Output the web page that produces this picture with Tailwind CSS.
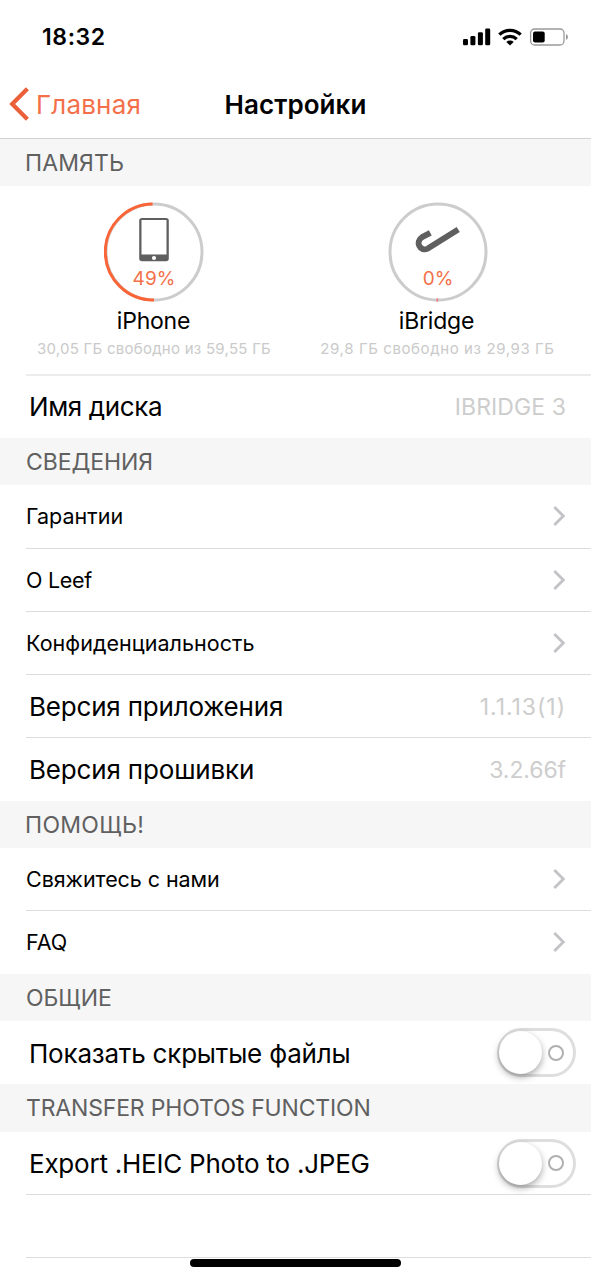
<!DOCTYPE html>
<html lang="ru">
<head>
<meta charset="utf-8">
<title>Настройки</title>
<script src="https://cdn.jsdelivr.net/npm/@tailwindcss/browser@4"></script>
</head>
<body class="w-[591px] h-[1280px] overflow-hidden bg-white text-black font-[Inter,sans-serif]">
<svg class="hidden">
  <symbol id="chevron" viewBox="0 0 14 22"><path d="M1.3 2 L10.3 11 L1.3 20" fill="none" stroke="#c4c4c8" stroke-width="2.9"/></symbol>
</svg>
<div class="relative flex flex-col h-[1280px] whitespace-nowrap">

  <!-- Status bar -->
  <header class="flex flex-col h-[139px] border-b border-[#d2d2d2]">
    <div class="flex items-center justify-between h-[74px] pl-[42px] pr-[23px]">
      <div class="text-[23px] leading-[74px] font-semibold tracking-[0.6px]">18:32</div>
      <svg class="w-[106px] h-[20px]" viewBox="462 26.5 106 20">
        <rect x="463" y="38.6" width="5" height="6.2" rx="1.3"/>
        <rect x="470.4" y="35.4" width="5" height="9.4" rx="1.3"/>
        <rect x="477.9" y="31.8" width="5" height="13" rx="1.3"/>
        <rect x="485.2" y="28" width="5" height="16.8" rx="1.3"/>
        <g fill="none" stroke="#000" stroke-width="3.3">
          <path d="M499.3 34.1 A15.6 15.6 0 0 1 520.7 34.1"/>
          <path d="M503.3 38.6 A9.8 9.8 0 0 1 516.7 38.6"/>
        </g>
        <path d="M506.3 41.4 A5.4 5.4 0 0 1 513.7 41.4 L510 45 Z"/>
        <rect x="530.6" y="28.5" width="33.4" height="16" rx="4" fill="none" stroke="#999" stroke-width="1.3"/>
        <rect x="533" y="31" width="11.7" height="11" rx="2"/>
        <path d="M566 33.6 Q568 34.6 568 36.6 Q568 38.6 566 39.6 Z" fill="#999"/>
      </svg>
    </div>
    <div class="grid grid-cols-[1fr_auto_1fr] items-center h-[62px]">
      <div class="flex items-center pl-[9px] gap-[7px]">
        <svg class="w-[20px] h-[34px] mb-[2px]" viewBox="0 0 20 34"><path d="M18.4 1.8 L3.2 17 L18.4 32.2" fill="none" stroke="#e9603a" stroke-width="4.2"/></svg>
        <span class="text-[26px] leading-[60px] tracking-[0.2px] text-[#f4704a]">Главная</span>
      </div>
      <h1 class="text-[26px] leading-[60px] font-semibold tracking-[0.08px]">Настройки</h1>
      <div></div>
    </div>
  </header>

  <!-- Storage -->
  <h2 class="h-[47px] pl-[25px] bg-[#f6f6f6] text-[#606060] text-[23px] leading-[49px] tracking-[0.12px]">ПАМЯТЬ</h2>
  <section class="flex h-[188px] pl-[12px] pr-[12px] pt-[16px]">
    <div class="flex flex-col items-center w-[284px]">
      <svg class="w-[100px] h-[100px]" viewBox="0 0 100 100">
        <circle cx="50" cy="50" r="48" fill="none" stroke="#ccc" stroke-width="3"/>
        <path d="M50 98 A48 48 0 0 1 48.6 2" fill="none" stroke="#fa6538" stroke-width="3"/>
        <path fill-rule="evenodd" fill="#5f5f5f" d="M38 16 H62 A2.8 2.8 0 0 1 64.8 18.8 V56.5 A2.8 2.8 0 0 1 62 59.3 H38 A2.8 2.8 0 0 1 35.2 56.5 V18.8 A2.8 2.8 0 0 1 38 16 Z M37.5 18 V52.6 H62.5 V18 Z"/>
        <circle cx="50" cy="56" r="2.1" fill="#fff"/>
        <text x="50" y="82.5" text-anchor="middle" class="text-[19px] tracking-[0.05px]" fill="#f47048">49%</text>
      </svg>
      <div class="mt-[4px] mr-[1px] text-[23px] leading-[30px] tracking-[-0.2px]">iPhone</div>
      <div class="mt-[2px] text-[15px] leading-[22px] tracking-[0.26px] text-[#cacaca]">30,05 ГБ свободно из 59,55 ГБ</div>
    </div>
    <div class="flex flex-col items-center w-[283px]">
      <svg class="w-[100px] h-[100px]" viewBox="0 0 100 100">
        <circle cx="50" cy="50" r="48" fill="none" stroke="#ccc" stroke-width="3"/>
        <path d="M49.3 96.4 V99.6" stroke="#fa7478" stroke-width="1.6"/>
        <path d="M42.3 30.8 L34.1 35.2 C27 39.5 31.6 50.2 39.8 46.6 L70.2 27.4" fill="none" stroke="#5f5f5f" stroke-width="5.9" stroke-linejoin="round"/>
        <text x="50" y="82.5" text-anchor="middle" class="text-[19px]" fill="#f47048">0%</text>
      </svg>
      <div class="mt-[4px] mr-[2px] text-[23px] leading-[30px] tracking-[-0.2px]">iBridge</div>
      <div class="mt-[2px] text-[15px] leading-[22px] tracking-[0.6px] text-[#cacaca]">29,8 ГБ свободно из 29,93 ГБ</div>
    </div>
  </section>
  <div class="flex items-center justify-between h-[64px] ml-[26px] pl-[3px] pr-[25px] border-t-2 border-[#ececec]">
    <span class="pb-[1px] text-[26px] leading-[40px] tracking-[-0.38px]">Имя диска</span>
    <span class="text-[23px] leading-[35px] tracking-[0.08px] text-[#cdcdcd]">IBRIDGE 3</span>
  </div>

  <!-- Information -->
  <h2 class="h-[47px] pl-[26px] bg-[#f6f6f6] text-[#606060] text-[23px] leading-[49px] tracking-[-0.08px]">СВЕДЕНИЯ</h2>
  <div class="flex items-center justify-between h-[64px] ml-[26px] pr-[24px] border-b border-[#dcdcdc]">
    <span class="text-[21.5px] tracking-[0.05px]">Гарантии</span>
    <svg class="w-[14px] h-[22px] mb-[1px]"><use href="#chevron"/></svg>
  </div>
  <div class="flex items-center justify-between h-[63px] ml-[26px] pr-[24px] border-b border-[#dcdcdc]">
    <span class="text-[21.5px] tracking-[-0.3px]">О Leef</span>
    <svg class="w-[14px] h-[22px] mb-[1px]"><use href="#chevron"/></svg>
  </div>
  <div class="flex items-center justify-between h-[63px] ml-[26px] pr-[24px] border-b border-[#dcdcdc]">
    <span class="text-[21.5px] tracking-[0.04px]">Конфиденциальность</span>
    <svg class="w-[14px] h-[22px] mb-[1px]"><use href="#chevron"/></svg>
  </div>
  <div class="flex items-center justify-between h-[63px] ml-[26px] pl-[3px] pr-[25px] border-b border-[#dcdcdc]">
    <span class="text-[26px] tracking-[-0.19px]">Версия приложения</span>
    <span class="text-[23px] leading-[35px] pt-[2px] tracking-[0.95px] text-[#cdcdcd]">1.1.13(1)</span>
  </div>
  <div class="flex items-center justify-between h-[63px] ml-[26px] pl-[3px] pr-[25px]">
    <span class="text-[26px] tracking-[-0.17px]">Версия прошивки</span>
    <span class="text-[23px] leading-[35px] pt-[1px] tracking-[-0.1px] text-[#cdcdcd]">3.2.66f</span>
  </div>

  <!-- Help -->
  <h2 class="h-[47px] pl-[25px] bg-[#f6f6f6] text-[#606060] text-[23px] leading-[49px] tracking-[0.3px]">ПОМОЩЬ!</h2>
  <div class="flex items-center justify-between h-[63px] ml-[26px] pr-[24px] border-b border-[#dcdcdc]">
    <span class="text-[21.5px] tracking-[-0.07px]">Свяжитесь с нами</span>
    <svg class="w-[14px] h-[22px]"><use href="#chevron"/></svg>
  </div>
  <div class="flex items-center justify-between h-[63px] ml-[26px] pr-[24px]">
    <span class="text-[21.5px] tracking-[-0.1px]">FAQ</span>
    <svg class="w-[14px] h-[22px] mb-[1px]"><use href="#chevron"/></svg>
  </div>

  <!-- General -->
  <h2 class="h-[47px] pl-[26px] bg-[#f6f6f6] text-[#606060] text-[23px] leading-[49px] tracking-[-0.05px]">ОБЩИЕ</h2>
  <div class="flex items-center justify-between h-[63px] ml-[26px] pl-[3px] pr-[15px]">
    <span class="pt-[2px] text-[26px] leading-[40px] tracking-[-0.2px]">Показать скрытые файлы</span>
    <div class="flex items-center justify-between w-[79px] h-[49px] pr-[9px] rounded-full border-3 border-[#dedede]">
      <div class="-ml-[1px] w-[43px] h-[43px] rounded-full bg-white shadow-[0_3px_7px_rgba(0,0,0,0.35)]"></div>
      <div class="w-[16px] h-[16px] rounded-full border-[2px] border-[#b0b0b0]"></div>
    </div>
  </div>

  <!-- Photo transfer -->
  <h2 class="h-[48px] pl-[26px] bg-[#f6f6f6] text-[#606060] text-[23px] leading-[49px] tracking-[-0.17px]">TRANSFER PHOTOS FUNCTION</h2>
  <div class="flex items-center justify-between h-[63px] ml-[26px] pl-[3px] pr-[15px] border-b border-[#dcdcdc]">
    <span class="text-[26px] tracking-[-0.23px]">Export .HEIC Photo to .JPEG</span>
    <div class="flex items-center justify-between w-[79px] h-[49px] pr-[9px] rounded-full border-3 border-[#dedede]">
      <div class="-ml-[1px] w-[43px] h-[43px] rounded-full bg-white shadow-[0_3px_7px_rgba(0,0,0,0.35)]"></div>
      <div class="w-[16px] h-[16px] rounded-full border-[2px] border-[#b0b0b0]"></div>
    </div>
  </div>
  <div class="h-[63px] ml-[26px] border-b border-[#dcdcdc]"></div>

  <!-- Home indicator -->
  <div class="absolute left-[190px] top-[1259px] w-[211px] h-[8px] rounded-full bg-black"></div>
</div>
</body>
</html>
